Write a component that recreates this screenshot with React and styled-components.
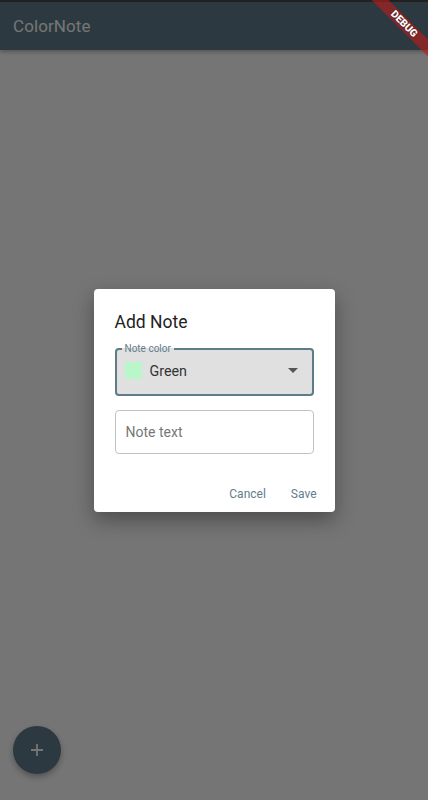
import React from "react";
import styled, { createGlobalStyle } from "styled-components";

const Global = createGlobalStyle`
  html, body, #root { margin: 0; padding: 0; height: 100%; }
  body { font-family: Roboto, "Liberation Sans", sans-serif; }
  * { box-sizing: border-box; }
`;

const Screen = styled.div`
  position: relative;
  width: 428px;
  height: 800px;
  overflow: hidden;
  display: flex;
  flex-direction: column;
  background: #ffffff;
`;

const StatusStrip = styled.div`
  height: 2px;
  background: #4a4a4a;
`;

const AppBar = styled.header`
  height: 48px;
  display: flex;
  align-items: center;
  padding-left: 13px;
  background: #607d8b;
  box-shadow: 0 2px 4px rgba(0, 0, 0, 0.28);
  position: relative;
  z-index: 1;
`;

const AppTitle = styled.h1`
  margin: 0;
  font-size: 17px;
  font-weight: 400;
  color: #ffffff;
  letter-spacing: 0.1px;
`;

const Body = styled.main`
  flex: 1;
  background: #ffffff;
`;

const Fab = styled.button`
  position: absolute;
  left: 13px;
  bottom: 26px;
  width: 48px;
  height: 48px;
  border: none;
  border-radius: 50%;
  background: #607d8b;
  display: flex;
  align-items: center;
  justify-content: center;
  box-shadow: 0 3px 6px rgba(0, 0, 0, 0.3);
  padding: 0;
`;

const Scrim = styled.div`
  position: absolute;
  inset: 0;
  z-index: 5;
  background: rgba(0, 0, 0, 0.54);
  display: flex;
  align-items: center;
  justify-content: center;
`;

const Dialog = styled.section`
  width: 241px;
  background: #ffffff;
  border-radius: 4px;
  box-shadow: 0 8px 20px rgba(0, 0, 0, 0.35);
  padding: 21px 21px 10px 21px;
  display: flex;
  flex-direction: column;
`;

const DialogTitle = styled.h2`
  margin: 0;
  font-size: 17.5px;
  line-height: 24px;
  font-weight: 400;
  color: #222222;
`;

const SelectField = styled.fieldset`
  margin: 9px 0 0 0;
  padding: 0 14px 7px 8px;
  border: 2px solid #5f7b89;
  border-radius: 4px;
  background: #e0e0e0;
  min-width: 0;
`;

const SelectLabel = styled.legend`
  margin-left: -3px;
  padding: 0 3px;
  font-size: 10px;
  line-height: 12px;
  color: #607d8b;
`;

const SelectRow = styled.div`
  height: 32px;
  display: flex;
  align-items: center;
  gap: 8px;
`;

const Swatch = styled.span`
  width: 17px;
  height: 17px;
  background: ${(p) => p.$color};
  flex: none;
`;

const SelectValue = styled.span`
  flex: 1;
  font-size: 14.3px;
  color: #333333;
`;

const TextField = styled.input`
  margin-top: 14px;
  height: 44px;
  width: 100%;
  border: 1px solid #c2c2c2;
  border-radius: 4px;
  padding: 0 10px;
  font-family: Roboto, "Liberation Sans", sans-serif;
  font-size: 14px;
  color: #333333;
  background: #ffffff;
  outline: none;
  &::placeholder { color: #777777; }
`;

const Actions = styled.div`
  margin-top: 32px;
  margin-right: -3px;
  display: flex;
  justify-content: flex-end;
  gap: 25px;
`;

const TextButton = styled.button`
  border: none;
  background: none;
  padding: 0;
  font-family: Roboto, "Liberation Sans", sans-serif;
  font-size: 12px;
  line-height: 16px;
  color: #607d8b;
`;

const Banner = styled.div`
  position: absolute;
  z-index: 10;
  left: 364px;
  top: 18px;
  width: 80px;
  height: 12px;
  transform: rotate(45deg);
  background: rgba(183, 28, 28, 0.63);
  color: #ffffff;
  font-family: Roboto, "Liberation Sans", sans-serif;
  font-size: 10.2px;
  font-weight: 900;
  line-height: 12px;
  text-align: center;
  text-shadow: 0 0 2px rgba(0, 0, 0, 0.5);
`;

export default function App() {
  return (
    <>
      <Global />
      <Screen>
        <StatusStrip />
        <AppBar>
          <AppTitle>ColorNote</AppTitle>
        </AppBar>
        <Body />
        <Fab aria-label="Add note">
          <svg width="12" height="12" viewBox="0 0 12 12">
            <path d="M6 0v12M0 6h12" stroke="#ffffff" strokeWidth="1.8" />
          </svg>
        </Fab>
        <Scrim>
          <Dialog>
            <DialogTitle>Add Note</DialogTitle>
            <SelectField>
              <SelectLabel>Note color</SelectLabel>
              <SelectRow>
                <Swatch $color="#b9f6ca" />
                <SelectValue>Green</SelectValue>
                <svg width="10" height="5" viewBox="0 0 10 5">
                  <path d="M0 0h10L5 5z" fill="#555555" />
                </svg>
              </SelectRow>
            </SelectField>
            <TextField placeholder="Note text" />
            <Actions>
              <TextButton>Cancel</TextButton>
              <TextButton>Save</TextButton>
            </Actions>
          </Dialog>
        </Scrim>
        <Banner>DEBUG</Banner>
      </Screen>
    </>
  );
}
